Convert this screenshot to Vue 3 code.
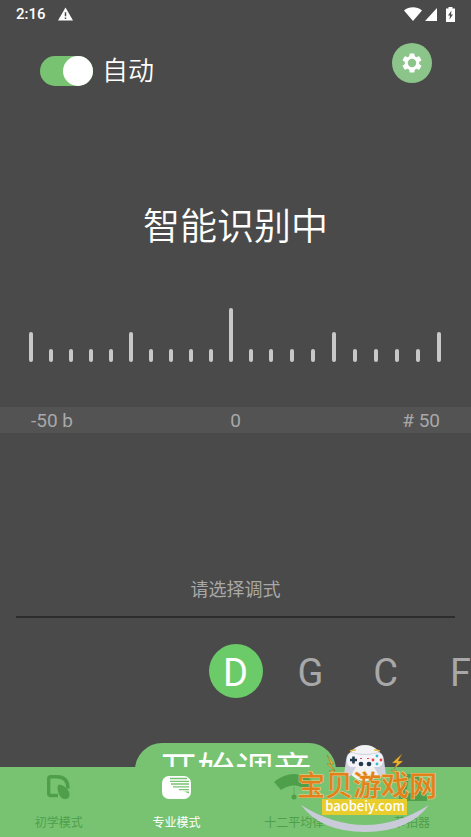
<template>
  <div class="tuner">
    <header class="status-bar">
      <span class="clock">2:16</span>
      <svg class="warn" viewBox="0 0 16 14" aria-hidden="true">
        <path d="M8 0 16 14H0z" fill="#fff" />
        <path d="M8 5v4.500M8 10.700v1.600" stroke="#4a4a4a" stroke-width="1.600" />
      </svg>
      <span class="status-icons">
        <svg width="18" height="14" viewBox="0 0 18 14" aria-hidden="true">
          <path d="M0 3.500C5-.9 13-.9 18 3.500L9 14z" fill="#fff" />
        </svg>
        <svg width="12" height="14" viewBox="0 0 12 14" aria-hidden="true">
          <path d="M12 1v13H0z" fill="#fff" />
        </svg>
        <svg class="battery" width="9" height="15" viewBox="0 0 9 15" aria-hidden="true">
          <path d="M2.500 0h4v1.500H9V15H0V1.500h2.500z" fill="#fff" />
          <path d="M5.500 3.500 2 8.500h2L3.500 12.500 7 7.500H5z" fill="#4a4a4a" />
        </svg>
      </span>
    </header>

    <div class="toolbar">
      <label class="auto">
        <input v-model="auto" type="checkbox" class="switch" />
        <span>自动</span>
      </label>
      <button type="button" class="settings" aria-label="设置">
        <svg width="24" height="24" viewBox="0 0 24 24">
          <path
            fill="#fff"
            d="M19.140 12.940c.04-.3.060-.61.060-.94s-.02-.64-.07-.94l2.030-1.580a.49.490 0 0 0 .12-.61l-1.920-3.320a.49.490 0 0 0-.59-.22l-2.390.96a7 7 0 0 0-1.620-.94l-.36-2.540a.48.480 0 0 0-.48-.41h-3.840a.48.480 0 0 0-.47.410l-.36 2.540c-.59.240-1.130.57-1.620.94l-2.390-.96a.48.480 0 0 0-.59.220L2.740 8.870a.48.480 0 0 0 .12.610l2.030 1.580c-.05.3-.09.630-.09.940s.02.640.070.94l-2.030 1.580a.49.490 0 0 0-.12.610l1.920 3.320c.12.220.37.290.59.220l2.390-.96c.5.380 1.030.7 1.620.94l.36 2.540c.05.240.24.410.48.410h3.840c.24 0 .44-.17.470-.41l.36-2.540c.59-.24 1.130-.56 1.620-.94l2.390.96c.22.080.47 0 .59-.22l1.920-3.320a.48.480 0 0 0-.12-.61zM12 16.200a4.200 4.200 0 1 1 0-8.400 4.200 4.200 0 0 1 0 8.400z"
          />
        </svg>
      </button>
    </div>

    <h1 class="title">智能识别中</h1>

    <div class="ruler">
      <span v-for="n in 21" :key="n" class="step" :class="{ wide: n > 12, last: n === 21 }">
        <i class="tick" :class="tickClass(n - 1)"></i>
      </span>
    </div>

    <div class="scale">
      <span>-50 b</span>
      <span>0</span>
      <span># 50</span>
    </div>

    <p class="hint">请选择调式</p>

    <div class="keys">
      <button
        v-for="k in keys"
        :key="k"
        type="button"
        class="key"
        :class="{ active: k === current }"
        @click="current = k"
      >{{ k }}</button>
    </div>

    <button type="button" class="start">开始调音</button>

    <nav class="tabs">
      <button
        v-for="(t, i) in tabs"
        :key="t"
        type="button"
        class="tab"
        :class="{ active: i === tab }"
        @click="tab = i"
      >
        <svg v-if="i === 0" width="32" height="28" viewBox="0 0 32 28">
          <path
            d="M15 22.500H7.500q-1.800 0-1.800-1.800V5.500q0-1.800 1.800-1.800H14c7 0 11 4 11 12"
            fill="none"
            stroke="currentColor"
            stroke-width="3.400"
          />
          <path d="M15 12c4-1 8 2 10.500 6 2 3.500 1 7.500-2.500 8s-6-2-7.500-6c-1-3-1.500-5-.5-8z" fill="currentColor" />
        </svg>
        <svg v-else-if="i === 1" width="32" height="28" viewBox="0 0 32 28">
          <rect x="1" y="3" width="29" height="23" rx="7" fill="currentColor" />
          <path d="M9 5.500h17M9 8.300h19M10 11h18M12 13.800h16M18 16.600h10" stroke="#78c372" stroke-width="1.300" />
          <path d="M23 18.500h5v2z" fill="#78c372" />
        </svg>
        <svg v-else-if="i === 2" width="40" height="28" viewBox="0 0 40 28">
          <path d="M0 9Q20-7 40 9l-7 8Q20 8 7 17z" fill="currentColor" />
          <path d="M20 14v9" stroke="currentColor" opacity=".6" />
          <circle cx="20" cy="24" r="2.500" fill="currentColor" />
        </svg>
        <svg v-else width="32" height="28" viewBox="0 0 32 28">
          <path fill="currentColor" fill-rule="evenodd" d="M9 1h14l3 19h3q2 0 2 3v5H3v-5q0-3 2-3h1zM13 5l-3 15h12L19 5z" />
        </svg>
        <span>{{ t }}</span>
      </button>
    </nav>

    <svg class="badge" width="142" height="92" viewBox="0 0 142 92">
      <path d="M4 63Q68 103 132 63Q112 90 68 90T4 63z" fill="#c9cbd8" />
      <circle cx="68" cy="21" r="18" fill="#f2f2f4" />
      <path
        d="M54 10q14 4 28 0 4 1 5 8l2 15q-5 4-8-1l-4-7H59l-4 7q-3 5-8 1l2-15q1-7 5-8z"
        fill="#cfd0de"
      />
      <path d="M55 11q13 4 26 0 5 1 5 7t-5 7H55q-5 0-5-7t5-7z" fill="#f4f4f8" />
      <path d="M53 9q3-1 6-1M77 8q3 0 6 1" fill="none" stroke="#e5b84b" stroke-width="1.500" />
      <path d="M53 18h7M56.500 14.500v7" stroke="#20384a" stroke-width="2.600" />
      <g fill="#34bfd0">
        <circle cx="80" cy="14" r="1.400" />
        <circle cx="80" cy="22" r="1.400" />
      </g>
      <g fill="#e64545">
        <circle cx="76" cy="18" r="1.400" />
        <circle cx="84" cy="18" r="1.400" />
        <path d="M63 16h2v1h-2zM70 16h2v1h-2z" />
      </g>
      <circle cx="64" cy="22" r="2.300" fill="#20384a" />
      <circle cx="72" cy="22" r="2.300" fill="#20384a" />
      <path
        d="M105 12l-10 9h5l-3 6 9-8h-5zM30 13l7 9h-4l5 7-8-7h4zM94 28l6 1-3 2zM38 28l-6 1 4 2z"
        fill="#f0b32e"
        stroke="#8c6a2a"
        stroke-width=".4"
      />
      <text class="badge-name" x="0" y="54">宝贝游戏网</text>
      <rect x="25" y="57" width="85" height="16" fill="#e8cd2d" />
      <text class="badge-site" x="68" y="69" text-anchor="middle">baobeiy.com</text>
    </svg>
  </div>
</template>

<script setup>
import { ref } from 'vue'

const auto = ref(true)
const current = ref('D')
const tab = ref(1)

const keys = ['D', 'G', 'C', 'F']
const tabs = ['初学模式', '专业模式', '十二平均律', '节拍器']

function tickClass(i) {
  if (i === 10) return 'center'
  return i % 5 === 0 ? 'major' : ''
}
</script>

<style>
body {
  background: #4a4a4a;
}
</style>

<style scoped>
.tuner {
  position: relative;
  display: flex;
  flex-direction: column;
  min-height: 100vh;
  overflow: hidden;
  background: #4a4a4a;
  color: #fff;
  font-family: Roboto, "Noto Sans CJK SC", sans-serif;
}

.tuner *,
.tuner {
  box-sizing: border-box;
}

button {
  padding: 0;
  border: 0;
  background: none;
  color: inherit;
  font-family: inherit;
  cursor: pointer;
}

.status-bar {
  display: flex;
  align-items: center;
  height: 28px;
  padding: 0 16px;
}

.clock {
  font-size: 15px;
  font-weight: 500;
}

.warn {
  width: 15px;
  height: 14px;
  margin-left: 12px;
}

.status-icons {
  display: flex;
  align-items: center;
  gap: 3px;
  height: 24px;
  margin-left: auto;
}

.battery {
  margin-left: 6px;
}

.toolbar {
  display: flex;
  align-items: center;
  justify-content: space-between;
  height: 70px;
  padding: 0 39px 0 40px;
}

.auto {
  display: flex;
  align-items: center;
  gap: 9px;
  padding-top: 16px;
  font-size: 26px;
  font-weight: 350;
  line-height: 32px;
}

.switch {
  appearance: none;
  display: flex;
  width: 53px;
  height: 30px;
  margin: 0;
  border-radius: 15px;
  background: #777;
}

.switch::before {
  content: "";
  width: 30px;
  height: 30px;
  border-radius: 50%;
  background: #fff;
}

.switch:checked {
  justify-content: flex-end;
  background: #78c372;
}

.settings {
  display: grid;
  place-items: center;
  width: 40px;
  height: 40px;
  border-radius: 50%;
  background: #8bc58a;
}

.title {
  margin: 103px 0 0;
  font-size: 37px;
  font-weight: 350;
  line-height: 54px;
  text-align: center;
}

.ruler {
  display: flex;
  align-items: flex-end;
  height: 54px;
  margin: 53px 30px 0 29px;
}

.step {
  display: flex;
  flex: 20 0 0;
}

.wide {
  flex-grow: 21;
}

.step.last {
  flex: none;
}

.tick {
  width: 4px;
  height: 13px;
  border-radius: 2px;
  background: #c8c8c8;
}

.major {
  height: 30px;
}

.center {
  height: 54px;
}

.scale {
  display: grid;
  grid-template-columns: 1fr auto 1fr;
  margin-top: 45px;
  padding: 2px 31px 0;
  background: #535353;
  color: #a8a8a8;
  font-size: 19px;
  line-height: 24px;
}

.scale span:last-child {
  text-align: right;
}

.hint {
  margin: 144px 16px 0;
  padding-bottom: 13px;
  border-bottom: 2px solid #2d2d2d;
  color: #a8a8a8;
  font-size: 18px;
  line-height: 26px;
  text-align: center;
}

.keys {
  display: flex;
  gap: 21px;
  margin-top: 26px;
  padding-left: calc(50% - 27px);
  overflow: hidden;
}

.key {
  flex: none;
  width: 54px;
  height: 54px;
  padding-top: 4px;
  border-radius: 50%;
  color: #a8a8a8;
  font-size: 38px;
  line-height: 50px;
}

.key.active {
  background: #6bcb68;
  color: #fff;
}

.start {
  align-self: center;
  flex: none;
  height: 54px;
  margin: 45px 0 -30px;
  padding: 2px 24px 0;
  border-radius: 27px;
  background: #78c372;
  font-size: 38px;
  line-height: 52px;
}

.tabs {
  position: relative;
  display: flex;
  height: 70px;
  margin-top: auto;
  background: #78c372;
}

.tab {
  display: flex;
  flex: 1 1 0;
  flex-direction: column;
  align-items: center;
  gap: 12px;
  padding-top: 6px;
  color: #4f9f4a;
  font-size: 12px;
  line-height: 20px;
}

.tab.active {
  color: #fff;
}

.badge {
  position: absolute;
  right: 32px;
  bottom: 3px;
  pointer-events: none;
}

.badge-name {
  fill: #e2801a;
  stroke: #f0cf8c;
  stroke-width: 1px;
  paint-order: stroke;
  font-family: "Noto Sans CJK SC", sans-serif;
  font-size: 28px;
  font-weight: 500;
}

.badge-site {
  fill: #fff;
  font-family: "Noto Sans CJK SC", sans-serif;
  font-size: 13px;
  font-weight: 500;
}
</style>
